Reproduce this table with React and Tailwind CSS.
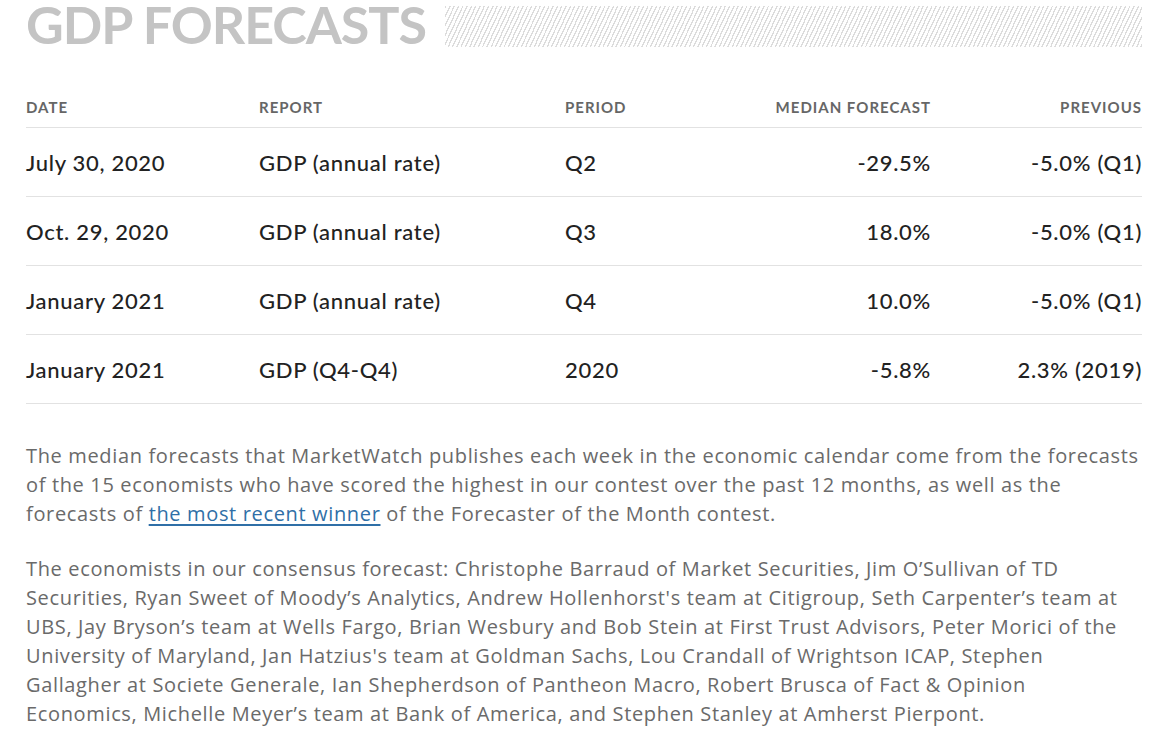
const ROWS = [
  { date: "July 30, 2020", report: "GDP (annual rate)", period: "Q2", median: "-29.5%", previous: "-5.0% (Q1)" },
  { date: "Oct. 29, 2020", report: "GDP (annual rate)", period: "Q3", median: "18.0%", previous: "-5.0% (Q1)" },
  { date: "January 2021", report: "GDP (annual rate)", period: "Q4", median: "10.0%", previous: "-5.0% (Q1)" },
  { date: "January 2021", report: "GDP (Q4-Q4)", period: "2020", median: "-5.8%", previous: "2.3% (2019)" },
];

const GRID = "grid grid-cols-[233px_306px_1fr_200px_211px]";

export default function App() {
  return (
    <div className="min-h-[742px] bg-white px-[26px] pr-[20px] font-['Lato',sans-serif]">
      {/* Title */}
      <div className="flex h-[48px] items-start">
        <h2 className="text-[52px] font-bold leading-[48px] tracking-[-1px] text-[#c4c4c4] whitespace-nowrap">
          GDP FORECASTS
        </h2>
        <div className="ml-[19px] mt-[6px] h-[41px] flex-1 bg-[repeating-linear-gradient(115deg,#dcdcdc_0px,#dcdcdc_1.3px,transparent_1.3px,transparent_3.9px)]" />
      </div>

      {/* Table */}
      <div className="mt-[49px]">
        <div className={`${GRID} border-b border-[#e2e2e2] pb-[10px] text-[15px] font-bold leading-[20px] tracking-[1px] text-[#666] uppercase`}>
          <div>Date</div>
          <div>Report</div>
          <div>Period</div>
          <div className="text-right">Median Forecast</div>
          <div className="text-right">Previous</div>
        </div>
        {ROWS.map((r, i) => (
          <div key={i} className={`${GRID} border-b border-[#e2e2e2] pt-[21px] pb-[19px] text-[22px] font-medium leading-[28px] tracking-[0.7px] text-[#222]`}>
            <div>{r.date}</div>
            <div>{r.report}</div>
            <div>{r.period}</div>
            <div className="text-right">{r.median}</div>
            <div className="text-right">{r.previous}</div>
          </div>
        ))}
      </div>

      {/* Notes */}
      <div className="mt-[37px] font-['Open_Sans',sans-serif] text-[20px] leading-[29px] tracking-[0.65px] text-[#6a6a6a] whitespace-nowrap">
        <p>
          The median forecasts that MarketWatch publishes each week in the economic calendar come from the forecasts<br />
          of the 15 economists who have scored the highest in our contest over the past 12 months, as well as the<br />
          forecasts of{" "}
          <a href="#" className="text-[#2f6fa7] underline underline-offset-[3px] decoration-[2px]">the most recent winner</a>{" "}
          of the Forecaster of the Month contest.
        </p>
        <p className="mt-[26px]">
          The economists in our consensus forecast: Christophe Barraud of Market Securities, Jim O’Sullivan of TD<br />
          Securities, Ryan Sweet of Moody’s Analytics, Andrew Hollenhorst's team at Citigroup, Seth Carpenter’s team at<br />
          UBS, Jay Bryson’s team at Wells Fargo, Brian Wesbury and Bob Stein at First Trust Advisors, Peter Morici of the<br />
          University of Maryland, Jan Hatzius's team at Goldman Sachs, Lou Crandall of Wrightson ICAP, Stephen<br />
          Gallagher at Societe Generale, Ian Shepherdson of Pantheon Macro, Robert Brusca of Fact &amp; Opinion<br />
          Economics, Michelle Meyer’s team at Bank of America, and Stephen Stanley at Amherst Pierpont.
        </p>
      </div>
    </div>
  );
}
